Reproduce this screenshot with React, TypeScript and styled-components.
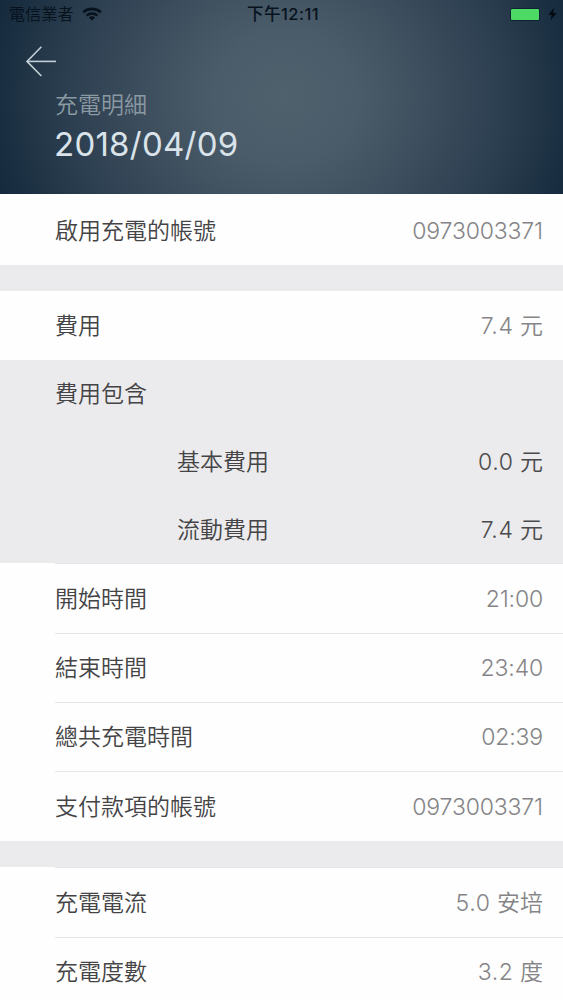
import styled, { createGlobalStyle } from 'styled-components';

interface Detail {
	label: string;
	value: string;
	unit?: string;
}

const FEE_DETAILS: Detail[] = [
	{ label: '基本費用', value: '0.0', unit: '元' },
	{ label: '流動費用', value: '7.4', unit: '元' },
];

const TIME_DETAILS: Detail[] = [
	{ label: '開始時間', value: '21:00' },
	{ label: '結束時間', value: '23:40' },
	{ label: '總共充電時間', value: '02:39' },
	{ label: '支付款項的帳號', value: '0973003371' },
];

const POWER_DETAILS: Detail[] = [
	{ label: '充電電流', value: '5.0', unit: '安培' },
	{ label: '充電度數', value: '3.2', unit: '度' },
];

const WifiIcon = () => (
	<svg width="20" height="14" viewBox="0 0 20 14" fill="none" stroke="#07121d" strokeWidth="2.6">
		<path d="M1.2 5.2C6 .8 14 .8 18.8 5.2" />
		<path d="M4.6 8.6C7.6 5.8 12.4 5.8 15.4 8.6" />
		<path d="M10 13.4 6.9 10.5C8.6 8.9 11.4 8.9 13.1 10.5Z" fill="#07121d" stroke="none" />
	</svg>
);

const BoltIcon = () => (
	<svg width="9" height="12" viewBox="0 0 9 12" fill="#030a12">
		<path d="M5.8 0 .4 6.8H3.7L2.7 12 8.6 4.9H5.1Z" />
	</svg>
);

const BackIcon = () => (
	<svg width="32" height="32" viewBox="0 0 32 32" fill="none" stroke="#c3ced6" strokeWidth="1.6">
		<path d="M31 16.4H2" />
		<path d="M16.4 1.8 2 16.4 16.4 31" />
	</svg>
);

const Amount = ({ value, unit, dark }: { value: string; unit?: string; dark?: boolean }) => (
	<Value $dark={dark} $spaced={!!unit}>
		{value}
		{unit && <Unit>{` ${unit}`}</Unit>}
	</Value>
);

const App = () => {
	return (
		<Screen>
			<GlobalStyle />
			<Header>
				<StatusBar>
					<Carrier>
						電信業者
						<WifiIcon />
					</Carrier>
					<Time>下午12:11</Time>
					<Power>
						<Battery />
						<BoltIcon />
					</Power>
				</StatusBar>
				<BackButton aria-label="返回">
					<BackIcon />
				</BackButton>
				<Subtitle>充電明細</Subtitle>
				<Title>2018/04/09</Title>
			</Header>

			<AccountRow>
				<Label>啟用充電的帳號</Label>
				<Amount value="0973003371" />
			</AccountRow>
			<Gap $height={26} />
			<Row $height={69}>
				<Label>費用</Label>
				<Amount value="7.4" unit="元" />
			</Row>

			<FeeSection>
				<Row $height={68}>
					<Label>費用包含</Label>
				</Row>
				{FEE_DETAILS.map(({ label, value, unit }) => (
					<Row key={label} $height={68} $nested>
						<Label>{label}</Label>
						<Amount value={value} unit={unit} dark />
					</Row>
				))}
			</FeeSection>

			<List>
				{TIME_DETAILS.map(({ label, value }) => (
					<ListRow key={label}>
						<Label>{label}</Label>
						<Amount value={value} />
					</ListRow>
				))}
			</List>
			<Gap $height={26.8} />
			<List>
				{POWER_DETAILS.map(({ label, value, unit }) => (
					<ListRow key={label}>
						<Label>{label}</Label>
						<Amount value={value} unit={unit} />
					</ListRow>
				))}
			</List>
		</Screen>
	);
};

export default App;

const GlobalStyle = createGlobalStyle`
	* {
		box-sizing: border-box;
	}
	body {
		margin: 0;
		background: #fff;
		font-family: Inter, "Noto Sans CJK TC", sans-serif;
	}
`;

const Screen = styled.main`
	display: flex;
	flex-direction: column;
	width: 563px;
	height: 1000px;
	overflow: hidden;
	background: #fefefe;
`;

const Header = styled.header`
	display: flex;
	flex-direction: column;
	flex-shrink: 0;
	height: 194px;
	background: radial-gradient(
		ellipse 325px 300px at 285px 97px,
		#50616e 0%,
		#4a5b69 22%,
		#3c4d5d 45%,
		#2b3e4f 68%,
		#1a2f41 86%,
		#10253a 100%
	);
`;

const StatusBar = styled.div`
	display: grid;
	grid-template-columns: 1fr auto 1fr;
	align-items: center;
	height: 28px;
	padding: 0 6px 0 9px;
	color: #07121d;
	font-size: 16px;
	line-height: 28px;
`;

const Carrier = styled.div`
	display: flex;
	gap: 8px;
	align-items: center;
	letter-spacing: 0.2px;
`;

const Time = styled.span`
	font-size: 16.5px;
	font-weight: 500;
	letter-spacing: 0.5px;
`;

const Power = styled.div`
	display: flex;
	gap: 8px;
	align-items: center;
	justify-content: flex-end;
`;

const Battery = styled.span`
	width: 30px;
	height: 13px;
	border: 1px solid #102334;
	border-radius: 2px;
	background: #4cd964;
`;

const BackButton = styled.button`
	display: flex;
	width: 32px;
	height: 32px;
	margin: 17px 0 0 25px;
	padding: 0;
	border: 0;
	background: none;
`;

const Subtitle = styled.p`
	margin: 11px 0 0 55px;
	color: #8b99a3;
	font-size: 23px;
	font-weight: 350;
	line-height: 34px;
`;

const Title = styled.h1`
	margin: 1px 0 0 54px;
	color: #dae3ea;
	font-size: 33px;
	font-weight: 400;
	letter-spacing: 0.25px;
	line-height: 42px;
`;

const Row = styled.div<{ $height: number; $nested?: boolean }>`
	display: flex;
	flex-shrink: 0;
	align-items: center;
	justify-content: space-between;
	height: ${({ $height }) => $height}px;
	padding: 0 20px 0 ${({ $nested }) => ($nested ? 177 : 55)}px;
`;

const AccountRow = styled(Row).attrs({ $height: 71 })`
	padding-top: 2px;
`;

const Gap = styled.div<{ $height: number }>`
	flex-shrink: 0;
	height: ${({ $height }) => $height}px;
	background: #ebeaec;
`;

const FeeSection = styled.section`
	flex-shrink: 0;
	margin-bottom: -0.6px;
	background: #ebeaec;
`;

const List = styled.section`
	flex-shrink: 0;
	padding-left: 55px;
	background: #fefefe;
`;

const ListRow = styled.div`
	display: flex;
	align-items: center;
	justify-content: space-between;
	height: 69.3px;
	padding: 0.5px 20px 0 0;
	border-top: 1px solid #e6e6e8;
`;

const Label = styled.span`
	color: #444446;
	font-size: 23px;
	font-weight: 350;
	line-height: 34px;
`;

const Value = styled.span<{ $dark?: boolean; $spaced?: boolean }>`
	color: ${({ $dark }) => ($dark ? '#4a4a4c' : '#858587')};
	font-size: 23px;
	font-weight: 300;
	letter-spacing: ${({ $spaced }) => ($spaced ? '0.6px' : '-0.15px')};
	line-height: 34px;
`;

const Unit = styled.span`
	font-weight: 350;
	letter-spacing: 0;
`;
